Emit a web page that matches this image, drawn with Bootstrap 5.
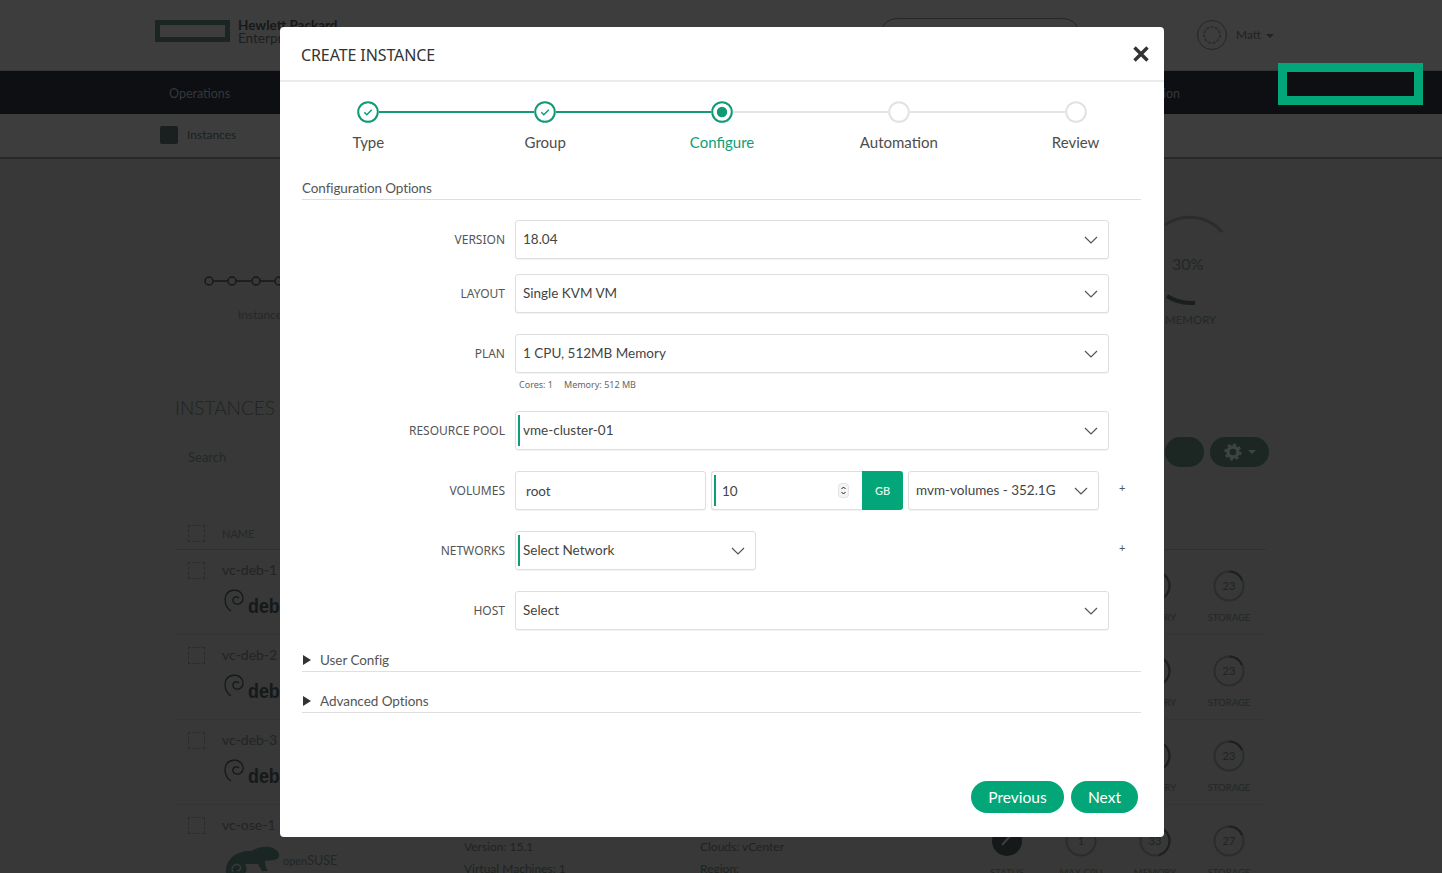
<!DOCTYPE html>
<html lang="en">
<head>
<meta charset="utf-8">
<title>Create Instance</title>
<link href="https://cdn.jsdelivr.net/npm/bootstrap@5.3.0/dist/css/bootstrap.min.css" rel="stylesheet">
<style>
html,body{height:873px;overflow:hidden;background:#373837}
body{font-family:Lato,"Liberation Sans",sans-serif;color:#444}
.stage{position:relative;width:1442px;height:873px;overflow:hidden;background:#373837;font-family:Lato,"Noto Sans",sans-serif;color:#232726}
.top-bar{height:71px;background:#3d3d3d;padding:0 168px 0 155px;border-bottom:1px solid #343534}
.hpe-mark{width:75px;height:22px;border:5px solid #1b2623;margin:0 8px 8px 0}
.hpe-name{font-size:13.5px;line-height:13px;color:#15191a;font-weight:700;margin-bottom:7px}
.hpe-name span{display:block;font-weight:400;color:#1b1f20}
.search-pill{width:200px;height:34px;border:1px solid #232726;border-radius:17px;margin-right:117px;align-self:flex-start;margin-top:18px}
.avatar{width:30px;height:30px;margin-right:9px;margin-bottom:1px}
.who{font-size:12px;color:#1f2322}
.caret-down{width:0;height:0;border-left:4px solid transparent;border-right:4px solid transparent;border-top:4px solid #1f2322;margin-left:5px;margin-top:2px}
.dark-nav{height:43px;background:#0d0f12;padding:3px 262px 0 169px;font-size:12.5px;color:#34383a}
.sub-nav{height:45px;background:#3d3d3d;padding:0 0 2px 160px;border-bottom:2px solid #27292a;font-size:12px;color:#1b1f1f}
.sub-ico{width:18px;height:18px;background:#1a2020;border-radius:2px;margin-right:9px}
.stats-panel{height:189px;padding:108px 222px 0 204px}
.stat-label{font-size:12px;color:#242827;margin:15px 0 0 34px;white-space:nowrap}
.gauge-wrap{width:60px}
.gauge-wrap svg{display:block;margin:-60px 0 0 -3px}
.mem-label{font-size:11.5px;margin:4px 0 0 5px;color:#242827;white-space:nowrap}
.list-head{padding:49px 173px 0 175px;height:89px}
.list-title{font-size:19px;font-weight:300;color:#202423;line-height:22px}
.list-tools{padding:0 173px 0 188px;height:61px}
.search-word{font-size:13px;color:#242827;margin-top:11px}
.pill-dark{height:30px;background:#1c2724;border-radius:15px;color:#3a4340;font-size:12px;gap:6px}
.pill-a{width:39px;margin-right:6px}
.pill-b{width:59px}
.rows{margin:0 176px 0 176px}
.row-head{height:52px;border-bottom:1px solid #2f3130;padding:27px 0 0 12px;font-size:11px;color:#242827}
.fake-check{width:17px;height:17px;border:1px dashed #2a2c2b;margin-right:17px;flex:none}
.vm-row{height:85px;border-bottom:1px solid #333433;padding:12px 0 0 12px}
.vm-name{font-size:14px;color:#212524;line-height:16px}
.vm-logo{margin-top:8px;margin-left:1px;height:34px}
.vm-logo svg{margin-top:2px}
.deb-word{font-family:"Liberation Sans",sans-serif;font-weight:700;font-size:21px;color:#15191a;line-height:28px;margin:6px 0 0 1px;transform:scaleX(.85);transform-origin:left}
.meters{margin-left:auto;gap:0}
.meter{width:74px;text-align:center;font-size:9.5px;color:#232726;line-height:12px;padding-top:8px}
.meter svg{display:block;margin:0 auto 10px}
.meter-num{font-size:11px;fill:#202423}
.info-col{width:236px;font-size:12px;line-height:22px;color:#1f2322;padding-top:19px}
.suse-word{font-size:12.5px;color:#222625;margin:9px 0 0 2px}

.hpe-box{position:absolute;left:1278px;top:63px;width:145px;height:42px;border:9px solid #03a678;background:#0d0f12;z-index:3}
.dlg-wrap{position:absolute;left:280px;top:27px;width:884px;height:810px;z-index:5;font-family:Lato,"Noto Sans",sans-serif;color:#444}
.dlg{height:100%;border:0;border-radius:4px;background:#fff}
.dlg .modal-header{height:55px;padding:0 15px 0 21px;border-bottom:2px solid #ececec}
.dlg-title{font-family:"Noto Sans",sans-serif;font-size:16px;line-height:20px;color:#333;letter-spacing:-.1px;margin:3px 0 0}
.dlg-close{padding:0;border:0;background:none;line-height:0;margin-top:0}
.dlg .modal-body{padding:0;flex:none}
.steps{height:87px}
.step-item{position:relative;width:176.8px;text-align:center;padding-top:19px;font-size:15px;line-height:20px;color:#4d4d4d}
.step-item::before{content:"";position:absolute;top:29px;left:calc(-50% + 11px);width:calc(100% - 22px);height:2px;background:#e4e4e4}
.step-item:first-child::before{display:none}
.step-item.passed::before{background:#119a75}
.step-item.now{color:#0d9e77}
.step-dot{display:block;width:22px;height:22px;margin:0 auto 8.5px}
.sec-title{margin:9px 23px 0 22px;font-size:13.5px;letter-spacing:-.1px;line-height:20px;color:#555;border-bottom:1px solid #dfdfdf;height:22px}
.form-area{padding:20px 0 0 0}
.f-row{display:flex;align-items:center;margin-bottom:15px}
.f-row.gap-big{margin-bottom:21px}
.f-row.gap-plan{margin-bottom:0}
.f-label{width:235px;text-align:right;padding-right:10px;font-size:12px;color:#555;flex:none;font-family:"Noto Sans",sans-serif}
.f-help{margin:6px 0 20px 239px;font-size:9px;line-height:12px;color:#666;display:flex;gap:11px;font-family:"Noto Sans",sans-serif}
.f-select.form-select,.f-input.form-control{height:39px;font-family:Lato,"Noto Sans",sans-serif;font-size:13.5px;color:#444;border:1px solid #dedede;border-radius:3px;box-shadow:0 1px 1px rgba(0,0,0,.05);padding:0 30px 0 7px}
.f-select.form-select{background-image:url("data:image/svg+xml,%3csvg xmlns='http://www.w3.org/2000/svg' viewBox='0 0 14 8'%3e%3cpath fill='none' stroke='%23555' stroke-width='1.2' d='M1 1l6 6 6-6'/%3e%3c/svg%3e");background-size:14px 8px;background-position:right 10px center}
.f-input.form-control{padding:0 10px}
.req-mark{position:relative;display:block}
.req-mark::before{content:"";position:absolute;left:3px;top:4px;bottom:4px;width:2px;background:#0d9e77;z-index:6}
.w-host{width:594px;flex:none}
.w-net{width:241px;flex:none}
.vol-name{width:191px;margin-right:5px;flex:none}
.vol-size{width:192px;margin-right:5px;flex:none}
.vol-store{width:191px;flex:none}
.vol-size .form-control{border-radius:3px 0 0 3px;border-right:0;padding-left:10px}
.gb-btn{width:41px;height:39px;background:#03a678;color:#dff5ee;font-size:11px;font-weight:600;border-radius:0 3px 3px 0;line-height:39px;text-align:center;flex:none}
.spin-ico{position:absolute;left:127px;top:12px;z-index:6}
.plus-sign{font-size:11px;color:#555;line-height:10px;align-self:flex-start;margin:12px 0 0 20px;width:9px}
.fold{margin:0 23px 0 22px;height:27px;border-bottom:1px solid #dfdfdf;font-size:13.5px;letter-spacing:-.05px;color:#555;display:flex;align-items:flex-end;padding-bottom:1px}
.fold-gap{margin-top:14px}
.fold-first{margin-top:12px}
.fold svg{margin:0 9px 5px 1px}
.dlg .modal-footer{margin-top:auto;padding:0 26px 24px 0;border:0;gap:7px}
.go-btn{margin:0;height:32px;border-radius:16px;background:#03a678;border:0;color:#fff;font-size:15.5px;line-height:32px;padding:0;text-align:center}
.go-prev{width:93px}
.go-next{width:67px}
</style>
</head>
<body>
<div class="stage">
  <div class="top-bar d-flex align-items-center">
    <div class="hpe-mark"></div>
    <div class="hpe-name flex-grow-1">Hewlett Packard<span>Enterprise</span></div>
    <div class="search-pill"></div>
    <svg class="avatar" viewBox="0 0 30 30"><circle cx="15" cy="15" r="14.5" fill="none" stroke="#232726"/><circle cx="15" cy="15" r="8" fill="none" stroke="#2b2f2e" stroke-dasharray="3 1.5" stroke-width="2"/></svg>
    <span class="who">Matt</span><span class="caret-down"></span>
  </div>
  <div class="dark-nav d-flex align-items-center justify-content-between"><span>Operations</span><span>Administration</span></div>
  <div class="sub-nav d-flex align-items-center"><span class="sub-ico"></span>Instances</div>

  <div class="stats-panel d-flex justify-content-between">
    <div>
      <svg width="120" height="14" viewBox="0 0 120 14"><g fill="none" stroke="#15191a" stroke-width="1.5"><circle cx="5" cy="7" r="4"/><path d="M9 7h15"/><circle cx="28" cy="7" r="4"/><path d="M32 7h15"/><circle cx="52" cy="7" r="4"/><path d="M56 7h15"/><circle cx="75" cy="7" r="4"/></g></svg>
      <div class="stat-label">Instances</div>
    </div>
    <div class="gauge-wrap">
      <svg width="70" height="100" viewBox="0 0 70 100"><path d="M8 18A43 43 0 0 1 65 25" fill="none" stroke="#2b2d2c" stroke-width="3"/><path d="M10 89A43 43 0 0 0 38 95.7" fill="none" stroke="#1a1e1d" stroke-width="4"/><text x="15" y="63" font-size="16" fill="#232726">30%</text></svg>
      <div class="mem-label">MEMORY</div>
    </div>
  </div>

  <div class="list-head"><div class="list-title">INSTANCES</div></div>
  <div class="list-tools d-flex align-items-start justify-content-between">
    <span class="search-word">Search</span>
    <div class="d-flex">
      <div class="pill-dark pill-a"></div>
      <div class="pill-dark pill-b d-flex align-items-center justify-content-center">
        <svg width="18" height="18" viewBox="0 0 18 18"><circle cx="9" cy="9" r="5" fill="none" stroke="#3d4542" stroke-width="3.4"/><circle cx="9" cy="9" r="7.4" fill="none" stroke="#3d4542" stroke-width="2.4" stroke-dasharray="2.9 2.9"/></svg>
        <span class="caret-down" style="border-top-color:#3d4542;margin:0"></span>
      </div>
    </div>
  </div>

  <div class="rows">
    <div class="row-head d-flex"><span class="fake-check"></span><span style="margin-top:1px">NAME</span></div>
    <div class="vm-row d-flex">
      <span class="fake-check"></span>
      <div><div class="vm-name">vc-deb-1</div><div class="vm-logo d-flex"><svg width="24" height="26" viewBox="0 0 24 26"><path d="M8 23C2 19 1 12 3 7c3-6 12-6 15-2 3 3 3 9-2 11-4 1-7-2-6-5 1-2 4-3 6-1" fill="none" stroke="#15191a" stroke-width="1.3"/></svg><span class="deb-word">debian</span></div></div>
      <div class="meters d-flex"><div class="meter"><svg width="32" height="32"><circle cx="16" cy="16" r="14.5" fill="none" stroke="#2b2d2c" stroke-width="2"/><path d="M16 1.5A14.5 14.5 0 0 1 30.5 16A14.5 14.5 0 0 1 20 30" fill="none" stroke="#1c201f" stroke-width="2"/></svg>MEMORY</div><div class="meter"><svg width="32" height="32"><circle cx="16" cy="16" r="14.5" fill="none" stroke="#2b2d2c" stroke-width="2"/><path d="M16 1.5A14.5 14.5 0 0 1 29 10" fill="none" stroke="#1c201f" stroke-width="2"/><text x="16" y="20" text-anchor="middle" class="meter-num">23</text></svg>STORAGE</div></div>
    </div>
    <div class="vm-row d-flex">
      <span class="fake-check"></span>
      <div><div class="vm-name">vc-deb-2</div><div class="vm-logo d-flex"><svg width="24" height="26" viewBox="0 0 24 26"><path d="M8 23C2 19 1 12 3 7c3-6 12-6 15-2 3 3 3 9-2 11-4 1-7-2-6-5 1-2 4-3 6-1" fill="none" stroke="#15191a" stroke-width="1.3"/></svg><span class="deb-word">debian</span></div></div>
      <div class="meters d-flex"><div class="meter"><svg width="32" height="32"><circle cx="16" cy="16" r="14.5" fill="none" stroke="#2b2d2c" stroke-width="2"/><path d="M16 1.5A14.5 14.5 0 0 1 30.5 16A14.5 14.5 0 0 1 20 30" fill="none" stroke="#1c201f" stroke-width="2"/></svg>MEMORY</div><div class="meter"><svg width="32" height="32"><circle cx="16" cy="16" r="14.5" fill="none" stroke="#2b2d2c" stroke-width="2"/><path d="M16 1.5A14.5 14.5 0 0 1 29 10" fill="none" stroke="#1c201f" stroke-width="2"/><text x="16" y="20" text-anchor="middle" class="meter-num">23</text></svg>STORAGE</div></div>
    </div>
    <div class="vm-row d-flex">
      <span class="fake-check"></span>
      <div><div class="vm-name">vc-deb-3</div><div class="vm-logo d-flex"><svg width="24" height="26" viewBox="0 0 24 26"><path d="M8 23C2 19 1 12 3 7c3-6 12-6 15-2 3 3 3 9-2 11-4 1-7-2-6-5 1-2 4-3 6-1" fill="none" stroke="#15191a" stroke-width="1.3"/></svg><span class="deb-word">debian</span></div></div>
      <div class="meters d-flex"><div class="meter"><svg width="32" height="32"><circle cx="16" cy="16" r="14.5" fill="none" stroke="#2b2d2c" stroke-width="2"/><path d="M16 1.5A14.5 14.5 0 0 1 30.5 16A14.5 14.5 0 0 1 20 30" fill="none" stroke="#1c201f" stroke-width="2"/></svg>MEMORY</div><div class="meter"><svg width="32" height="32"><circle cx="16" cy="16" r="14.5" fill="none" stroke="#2b2d2c" stroke-width="2"/><path d="M16 1.5A14.5 14.5 0 0 1 29 10" fill="none" stroke="#1c201f" stroke-width="2"/><text x="16" y="20" text-anchor="middle" class="meter-num">23</text></svg>STORAGE</div></div>
    </div>
    <div class="vm-row d-flex">
      <span class="fake-check"></span>
      <div style="width:242px;flex:none"><div class="vm-name">vc-ose-1</div><div class="vm-logo d-flex" style="margin-top:10px;margin-left:3px"><svg width="56" height="30" viewBox="0 0 56 30"><path d="M1 28C0 14 12 5 27 6c7-5 18-6 24-1 4 3 4 7 1 9-4 2-9 1-12 2 0 4 1 8 3 10h-6l-4-7H20c2 3 2 7 0 9H3z" fill="#1a2623"/><path d="M8 27c-3-5 3-10 7-6 2 3-2 6-3 4" fill="none" stroke="#373837" stroke-width="1.5"/></svg><span class="suse-word"><small>open</small>SUSE</span></div></div>
      <div class="info-col">Version: 15.1<br>Virtual Machines: 1</div>
      <div class="info-col">Clouds: vCenter<br>Region:</div>
      <div class="meters d-flex">
        <div class="meter"><svg width="32" height="32"><circle cx="16" cy="16" r="15" fill="#15191a"/><path d="M11 20l10-11" stroke="#3b3f3e" stroke-width="2" fill="none"/></svg>STATUS</div>
        <div class="meter"><svg width="32" height="32"><circle cx="16" cy="16" r="14.5" fill="none" stroke="#2b2d2c" stroke-width="2"/><text x="16" y="20" text-anchor="middle" class="meter-num">1</text></svg>MAX CPU</div>
        <div class="meter"><svg width="32" height="32"><circle cx="16" cy="16" r="14.5" fill="none" stroke="#2b2d2c" stroke-width="2"/><path d="M16 1.5A14.5 14.5 0 0 1 30.5 16A14.5 14.5 0 0 1 20 30" fill="none" stroke="#1c201f" stroke-width="2"/><text x="16" y="20" text-anchor="middle" class="meter-num">33</text></svg>MEMORY</div>
        <div class="meter"><svg width="32" height="32"><circle cx="16" cy="16" r="14.5" fill="none" stroke="#2b2d2c" stroke-width="2"/><path d="M16 1.5A14.5 14.5 0 0 1 29 10" fill="none" stroke="#1c201f" stroke-width="2"/><text x="16" y="20" text-anchor="middle" class="meter-num">27</text></svg>STORAGE</div>
      </div>
    </div>
  </div>

  <div class="hpe-box"></div>

  <div class="dlg-wrap">
    <div class="modal-content dlg">
      <div class="modal-header">
        <h5 class="dlg-title fw-normal flex-grow-1">CREATE INSTANCE</h5>
        <button type="button" class="dlg-close" aria-label="Close"><svg width="16" height="16" viewBox="0 0 16 16"><path d="M1.5 1.5l13 13M14.5 1.5l-13 13" stroke="#333" stroke-width="3.4" fill="none"/></svg></button>
      </div>
      <div class="modal-body">
        <div class="steps d-flex">
          <div class="step-item passed"><svg class="step-dot" viewBox="0 0 22 22"><circle cx="11" cy="11" r="9.8" fill="#fff" stroke="#119a75" stroke-width="2"/><path d="M7.3 11.3l2.5 2.5 5-5" fill="none" stroke="#119a75" stroke-width="1.5"/></svg>Type</div>
          <div class="step-item passed"><svg class="step-dot" viewBox="0 0 22 22"><circle cx="11" cy="11" r="9.8" fill="#fff" stroke="#119a75" stroke-width="2"/><path d="M7.3 11.3l2.5 2.5 5-5" fill="none" stroke="#119a75" stroke-width="1.5"/></svg>Group</div>
          <div class="step-item passed now"><svg class="step-dot" viewBox="0 0 22 22"><circle cx="11" cy="11" r="9.8" fill="#fff" stroke="#119a75" stroke-width="2"/><circle cx="11" cy="11" r="5.2" fill="#119a75"/></svg>Configure</div>
          <div class="step-item"><svg class="step-dot" viewBox="0 0 22 22"><circle cx="11" cy="11" r="9.8" fill="#fff" stroke="#e2e2e2" stroke-width="2"/></svg>Automation</div>
          <div class="step-item"><svg class="step-dot" viewBox="0 0 22 22"><circle cx="11" cy="11" r="9.8" fill="#fff" stroke="#e2e2e2" stroke-width="2"/></svg>Review</div>
        </div>
        <div class="sec-title">Configuration Options</div>
        <div class="form-area">
          <div class="f-row"><label class="f-label">VERSION</label><select class="form-select f-select w-host"><option>18.04</option></select></div>
          <div class="f-row gap-big"><label class="f-label">LAYOUT</label><select class="form-select f-select w-host"><option>Single KVM VM</option></select></div>
          <div class="f-row gap-plan"><label class="f-label">PLAN</label><select class="form-select f-select w-host"><option>1 CPU, 512MB Memory</option></select></div>
          <div class="f-help"><span>Cores: 1</span><span>Memory: 512 MB</span></div>
          <div class="f-row gap-big"><label class="f-label">RESOURCE POOL</label><span class="req-mark w-host"><select class="form-select f-select"><option>vme-cluster-01</option></select></span></div>
          <div class="f-row gap-big"><label class="f-label">VOLUMES</label>
            <input class="form-control f-input vol-name" value="root">
            <div class="d-flex vol-size req-mark"><input class="form-control f-input" value="10">
              <svg class="spin-ico" width="11" height="15" viewBox="0 0 11 15"><rect x=".5" y=".5" width="10" height="14" rx="3" fill="#f4f4f4" stroke="#e2e2e2"/><path d="M3.5 6l2-2 2 2M3.5 9l2 2 2-2" fill="none" stroke="#222"/></svg>
              <span class="gb-btn">GB</span></div>
            <select class="form-select f-select vol-store"><option>mvm-volumes - 352.1G</option></select>
            <span class="plus-sign">+</span>
          </div>
          <div class="f-row gap-big"><label class="f-label">NETWORKS</label><span class="req-mark w-net"><select class="form-select f-select"><option>Select Network</option></select></span><span class="plus-sign" style="margin-left:363px">+</span></div>
          <div class="f-row"><label class="f-label">HOST</label><select class="form-select f-select w-host"><option>Select</option></select></div>
        </div>
        <div class="fold fold-first"><svg width="8" height="10" viewBox="0 0 8 10"><path d="M0 0l8 5-8 5z" fill="#333"/></svg>User Config</div>
        <div class="fold fold-gap"><svg width="8" height="10" viewBox="0 0 8 10"><path d="M0 0l8 5-8 5z" fill="#333"/></svg>Advanced Options</div>
      </div>
      <div class="modal-footer">
        <button type="button" class="btn go-btn go-prev">Previous</button>
        <button type="button" class="btn go-btn go-next">Next</button>
      </div>
    </div>
  </div>
</div>
<script src="https://cdn.jsdelivr.net/npm/bootstrap@5.3.0/dist/js/bootstrap.bundle.min.js"></script>
</body>
</html>
